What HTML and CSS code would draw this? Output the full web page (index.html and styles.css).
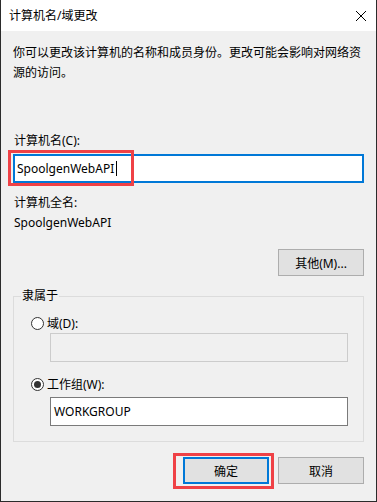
FILE: index.html
```html
<!DOCTYPE html>
<html lang="zh-CN">
<head>
    <meta charset="UTF-8">
    <meta name="viewport" content="width=device-width, initial-scale=1.0">
    <title>计算机名/域更改</title>
    <link rel="stylesheet" href="styles.css">
</head>
<body>
    <div class="dialog">
        <div class="titlebar">
            <span class="title">计算机名/域更改</span>
            <svg class="close-icon" width="12" height="12" viewBox="0 0 12 12" fill="none" stroke="#000" stroke-width="1">
                <line x1="1" y1="1" x2="11" y2="11"/>
                <line x1="11" y1="1" x2="1" y2="11"/>
            </svg>
        </div>

        <div class="content">
            <p class="intro">你可以更改该计算机的名称和成员身份。更改可能会影响对网络资源的访问。</p>

            <div class="label name-label">计算机名(C):</div>
            <div class="field-wrap">
                <div class="textbox focused">SpoolgenWebAPI<span class="caret"></span></div>
                <span class="mark mark-name"></span>
            </div>

            <div class="label full-label">计算机全名:</div>
            <div class="label">SpoolgenWebAPI</div>

            <div class="row-right">
                <button class="btn">其他(M)...</button>
            </div>

            <fieldset class="group">
                <legend>隶属于</legend>
                <div class="radio">
                    <span class="radio-dot"></span>
                    域(D):
                </div>
                <div class="textbox sub disabled"></div>
                <div class="radio second">
                    <span class="radio-dot checked"></span>
                    工作组(W):
                </div>
                <div class="textbox sub workgroup">WORKGROUP</div>
            </fieldset>

            <div class="actions">
                <div class="btn-wrap">
                    <button class="btn default">确定</button>
                    <span class="mark mark-ok"></span>
                </div>
                <button class="btn">取消</button>
            </div>
        </div>
    </div>
</body>
</html>
```

FILE: styles.css
```css
* {
    margin: 0;
    padding: 0;
    box-sizing: border-box;
    font-family: "Noto Sans", "Noto Sans CJK SC", sans-serif;
}

body {
    background: #f0f0f0;
    color: #000;
    font-size: 12px;
}

.dialog {
    width: 377px;
    height: 502px;
    background: #f0f0f0;
    border: 1px solid #2b2b2b;
    border-top: none;
}

.titlebar {
    height: 31px;
    background: #fff;
    display: flex;
    align-items: center;
    justify-content: space-between;
    padding-left: 8px;
    padding-right: 9px;
}

.title {
    line-height: 16px;
}

.content {
    padding: 0 12px 0 12px;
}

.intro {
    margin-top: 12px;
    line-height: 20px;
    padding-right: 2px;
}

.label {
    line-height: 20px;
    padding-left: 1px;
}

.name-label {
    margin-top: 48px;
}

.full-label {
    margin-top: 10px;
}

.field-wrap {
    position: relative;
    margin-top: 3px;
}

.textbox {
    height: 29px;
    background: #fff;
    border: 1px solid #7a7a7a;
    padding-left: 3px;
    line-height: 27px;
    display: flex;
    align-items: center;
}

.textbox.focused {
    border: 2px solid #0078d7;
    padding-left: 2px;
}

.caret {
    display: inline-block;
    width: 1px;
    height: 15px;
    background: #000;
    margin-left: 2px;
}

.mark {
    position: absolute;
    border: 3px solid #ef4146;
    pointer-events: none;
}

.mark-name {
    left: -5px;
    top: -4px;
    width: 126px;
    height: 36px;
}

.row-right {
    display: flex;
    justify-content: flex-end;
    margin-top: 16px;
}

.btn {
    width: 86px;
    height: 27px;
    background: #e1e1e1;
    border: 1px solid #adadad;
    font-size: 12px;
    color: #000;
}

.btn.default {
    border: 2px solid #0078d7;
}

.group {
    margin-top: 11px;
    border: 1px solid #dcdcdc;
    padding: 0 15px 15px 17px;
}

.group legend {
    margin-left: -10px;
    padding: 0 1px;
    line-height: 18px;
}

.radio {
    display: flex;
    align-items: center;
    height: 20px;
    margin-top: 8px;
}

.radio.second {
    margin-top: 12px;
}

.radio-dot {
    width: 13px;
    height: 13px;
    border: 1px solid #333;
    border-radius: 50%;
    background: #fff;
    margin-right: 3px;
    display: flex;
    align-items: center;
    justify-content: center;
}

.radio-dot.checked::after {
    content: "";
    width: 7px;
    height: 7px;
    border-radius: 50%;
    background: #333;
}

.textbox.sub {
    margin-left: 19px;
}

.textbox.disabled {
    background: #f0f0f0;
    border-color: #cccccc;
}

.textbox.workgroup {
    margin-top: 3px;
}

.actions {
    display: flex;
    justify-content: flex-end;
    gap: 9px;
    margin-top: 15px;
}

.btn-wrap {
    position: relative;
}

.mark-ok {
    left: -10px;
    top: -4px;
    width: 101px;
    height: 36px;
}
```
